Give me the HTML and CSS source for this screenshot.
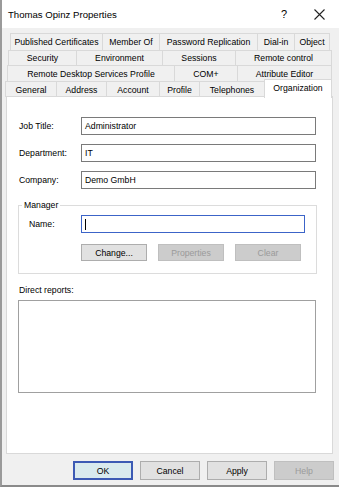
FILE: index.html
```html
<!DOCTYPE html>
<html lang="en">
<head>
  <meta charset="UTF-8">
  <title>Thomas Opinz Properties</title>
  <link rel="stylesheet" href="styles.css">
</head>
<body>
  <div class="window">
    <div class="titlebar">
      <span class="title">Thomas Opinz Properties</span>
      <span class="help-icon">?</span>
      <svg class="close-icon" width="11" height="11" viewBox="0 0 11 11">
        <path d="M0.5 0.5 L10.5 10.5 M10.5 0.5 L0.5 10.5" stroke="#222" stroke-width="1.1"/>
      </svg>
    </div>

    <!-- tab rows, top to bottom -->
    <div class="tabs">
      <div class="tab-row row1">
        <div class="tab" style="width:93px">Published Certificates</div>
        <div class="tab" style="width:57px">Member Of</div>
        <div class="tab" style="width:98px">Password Replication</div>
        <div class="tab" style="width:37px">Dial-in</div>
        <div class="tab" style="width:35px">Object</div>
      </div>
      <div class="tab-row row2">
        <div class="tab" style="width:69px">Security</div>
        <div class="tab" style="width:86px">Environment</div>
        <div class="tab" style="width:73px">Sessions</div>
        <div class="tab" style="width:96px">Remote control</div>
      </div>
      <div class="tab-row row3">
        <div class="tab" style="width:168px">Remote Desktop Services Profile</div>
        <div class="tab" style="width:63px">COM+</div>
        <div class="tab" style="width:94px">Attribute Editor</div>
      </div>
      <div class="tab-row row4">
        <div class="tab" style="width:52px">General</div>
        <div class="tab" style="width:50px">Address</div>
        <div class="tab" style="width:53px">Account</div>
        <div class="tab" style="width:40px">Profile</div>
        <div class="tab" style="width:65px">Telephones</div>
        <div class="tab active" style="width:68px">Organization</div>
      </div>
    </div>

    <div class="panel">
      <div class="field">
        <label>Job Title:</label>
        <div class="input">Administrator</div>
      </div>
      <div class="field">
        <label>Department:</label>
        <div class="input">IT</div>
      </div>
      <div class="field">
        <label>Company:</label>
        <div class="input">Demo GmbH</div>
      </div>

      <fieldset class="group">
        <legend>Manager</legend>
        <div class="field name-field">
          <label>Name:</label>
          <div class="input focused"><span class="caret"></span></div>
        </div>
        <div class="group-buttons">
          <button class="btn">Change...</button>
          <button class="btn disabled">Properties</button>
          <button class="btn disabled">Clear</button>
        </div>
      </fieldset>

      <div class="reports-label">Direct reports:</div>
      <div class="listbox"></div>
    </div>

    <div class="footer">
      <button class="btn default">OK</button>
      <button class="btn">Cancel</button>
      <button class="btn">Apply</button>
      <button class="btn disabled">Help</button>
    </div>
  </div>
</body>
</html>
```

FILE: styles.css
```css
* {
  box-sizing: border-box;
}
body {
  margin: 0;
  font-family: "Liberation Sans", Arial, sans-serif;
  font-size: 8.7px;
  color: #000;
  background: #f0f0f0;
}
.window {
  width: 339px;
  height: 487px;
  background: #f0f0f0;
  border-left: 2px solid #9a9a9a;
  border-bottom: 2px solid #8a8a8a;
  display: flex;
  flex-direction: column;
}
.titlebar {
  height: 28px;
  background: #fff;
  display: flex;
  align-items: center;
  padding: 0 0 0 6px;
}
.title {
  font-size: 9.6px;
  flex-grow: 1;
}
.help-icon {
  font-size: 11px;
  margin-right: 27px;
}
.close-icon {
  margin-right: 14px;
}
.tabs {
  margin-top: 5px;
  display: flex;
  flex-direction: column;
}
.tab-row {
  display: flex;
  height: 16px;
}
.row1 {
  margin-left: 8px;
  height: 17px;
}
.row2 {
  margin-left: 6px;
  height: 15px;
}
.row3 {
  margin-left: 5px;
}
.row4 {
  margin-left: 3px;
}
.tab {
  border-top: 1px solid #d9d9d9;
  border-right: 1px solid #d9d9d9;
  background: #f0f0f0;
  display: flex;
  align-items: center;
  justify-content: center;
  white-space: nowrap;
}
.tab:first-child {
  border-left: 1px solid #d9d9d9;
}
.tab.active {
  background: #fff;
  border-left: 1px solid #d9d9d9;
  margin-left: -1px;
  margin-top: -2px;
  height: 19px;
  position: relative;
  z-index: 1;
  padding-bottom: 2px;
}
.panel {
  margin: -1px 6px 0 4px;
  height: 358px;
  background: #fff;
  border: 1px solid #d9d9d9;
  padding: 20px 0 0 0;
  display: flex;
  flex-direction: column;
}
.field {
  display: flex;
  align-items: center;
  margin-bottom: 9px;
}
.field label {
  width: 74px;
  padding-left: 12px;
}
.input {
  width: 235px;
  height: 18px;
  border: 1px solid #7a7a7a;
  background: #fff;
  padding: 0 3px;
  display: flex;
  align-items: center;
}
.group {
  margin: 2px 0 0 11px;
  width: 299px;
  height: 74px;
  border: 1px solid #dcdcdc;
  padding: 5px 0 0 0;
}
.group legend {
  padding: 0 2px;
  margin-left: 3px;
  font-size: 8.7px;
}
.name-field {
  margin-bottom: 11px;
}
.name-field label {
  width: 62px;
  padding-left: 10px;
}
.input.focused {
  width: 224px;
  border-color: #3c64c8;
}
.caret {
  display: block;
  width: 1px;
  height: 11px;
  background: #000;
}
.group-buttons {
  display: flex;
  gap: 11px;
  margin-left: 62px;
}
.btn {
  font-family: "Liberation Sans", Arial, sans-serif;
  font-size: 8.7px;
  width: 66px;
  height: 17px;
  padding: 0;
  background: #e1e1e1;
  border: 1px solid #adadad;
  color: #000;
}
.btn.disabled {
  background: #cccccc;
  border-color: #bfbfbf;
  color: #9a9a9a;
}
.reports-label {
  margin: 11px 0 0 12px;
}
.listbox {
  margin: 5px 0 0 11px;
  width: 298px;
  height: 93px;
  border: 1px solid #a0a0a0;
  background: #fff;
}
.footer {
  display: flex;
  justify-content: flex-end;
  gap: 7px;
  padding: 7px 5px 0 0;
}
.footer .btn {
  width: 60px;
  height: 19px;
}
.btn.default {
  background: #d9eaee;
  border: 1px solid #3c5ab4;
  box-shadow: inset 0 0 0 1px #3c5ab4;
}
```
